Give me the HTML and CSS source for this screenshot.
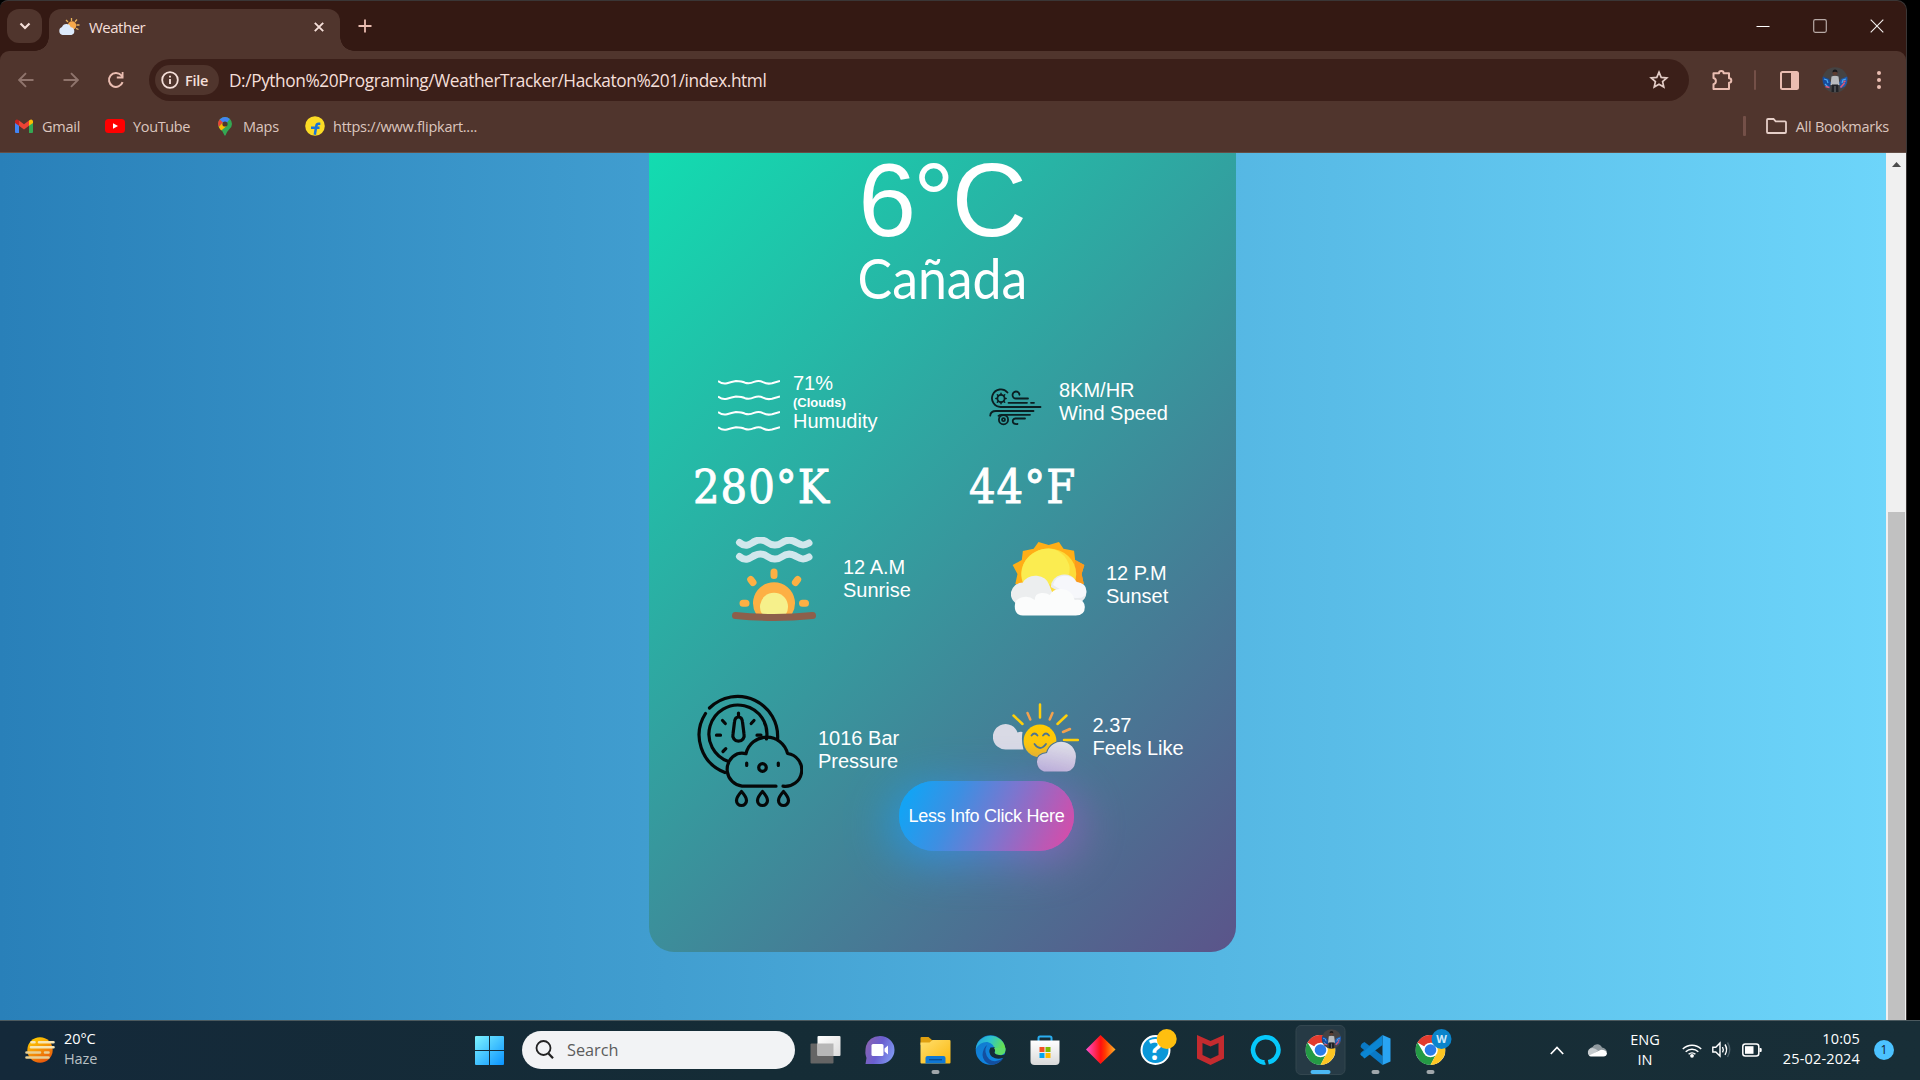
FILE: index.html
```
<!DOCTYPE html>
<html lang="en">
<head>
<meta charset="utf-8">
<title>Weather</title>
<link rel="stylesheet" href="styles.css">
</head>
<body>
<svg class="defs" width="0" height="0">
  <defs>
    <linearGradient id="g-start" x1="0" y1="0" x2="1" y2="1"><stop offset="0" stop-color="#7df3ff"/><stop offset="1" stop-color="#0a93ff"/></linearGradient>
    <linearGradient id="g-haze" x1="0.2" y1="0" x2="0.7" y2="1"><stop offset="0" stop-color="#ffd000"/><stop offset="1" stop-color="#e8540c"/></linearGradient>
    <linearGradient id="g-chat" x1="0" y1="0.2" x2="1" y2="0.6"><stop offset="0" stop-color="#8a63b0"/><stop offset=".5" stop-color="#6a5fd0"/><stop offset="1" stop-color="#7f96f0"/></linearGradient>
    <linearGradient id="g-folder" x1="0" y1="0" x2="1" y2="1"><stop offset="0" stop-color="#ffdf6e"/><stop offset="1" stop-color="#fbb70d"/></linearGradient>
    <linearGradient id="g-edge" x1="0" y1="0" x2="1" y2="0.3"><stop offset="0" stop-color="#1f9fe0"/><stop offset=".5" stop-color="#2cc3d0"/><stop offset="1" stop-color="#66e04f"/></linearGradient>
    <linearGradient id="g-edge2" x1="0" y1="0" x2="0.5" y2="1"><stop offset="0" stop-color="#1278c8"/><stop offset="1" stop-color="#0f86e4"/></linearGradient>
    <linearGradient id="g-store" x1="0" y1="0" x2="0" y2="1"><stop offset="0" stop-color="#ffffff"/><stop offset="1" stop-color="#d9d9d9"/></linearGradient>
    <linearGradient id="g-diamond" x1="0" y1="0" x2="1" y2="0"><stop offset="0" stop-color="#ff4fd0"/><stop offset=".5" stop-color="#ff1010"/><stop offset=".65" stop-color="#ff3a00"/><stop offset="1" stop-color="#ffb42a"/></linearGradient>
    <linearGradient id="g-tv" x1="0" y1="0" x2="1" y2="1"><stop offset="0" stop-color="#ffffff"/><stop offset="1" stop-color="#dcdcdc"/></linearGradient>
    <linearGradient id="g-cloud" x1="0.6" y1="0" x2="0.4" y2="1"><stop offset="0" stop-color="#dedfe8"/><stop offset="1" stop-color="#c6b9dc"/></linearGradient>
    <linearGradient id="g-smile" x1="0" y1="0" x2="0" y2="1"><stop offset="0" stop-color="#ffcc00"/><stop offset=".6" stop-color="#fdc50c"/><stop offset="1" stop-color="#e9b32e"/></linearGradient>
    <symbol id="avatar" viewBox="0 0 26 26">
      <circle cx="13" cy="13" r="12.7" fill="#454343"/>
      <path d="M.8 9.5 7 12l2 4-1.500 5.500-4.500-2Q.5 16 .5 12Z" fill="#174b9c"/>
      <path d="M25.200 9.500 19 12l-2 4 1.500 5.500 4.500-2Q25.500 16 25.500 12Z" fill="#1f5aae"/>
      <path d="M2 12l3 1 1 3M3 17l3 3M24 12l-3 1-1 3" stroke="#4aa7ee" stroke-width="1.200" fill="none"/>
      <path d="M3.500 19.500l4 1M22.500 16l-4 4.500M23.500 14l-2 1" stroke="#df5875" stroke-width="1.600" fill="none"/>
      <path d="M9.500 9.500Q13 8 16.500 9.500L17.500 18H8.500Z" fill="#b8babd"/>
      <path d="M10 17.500h6l.5 7.500H9.500Z" fill="#202226"/>
      <path d="M13 19v6" stroke="#9a9ca0" stroke-width=".7"/>
      <circle cx="13" cy="6" r="2.500" fill="#5b3c30"/><path d="M10.500 5.500q0-3 2.500-3t2.500 3q-2.500-1.500-5 0" fill="#17181a"/>
    </symbol>
    <symbol id="chrome" viewBox="0 0 30 30">
      <circle cx="15" cy="15" r="15" fill="#fff"/>
      <path d="M15 15 2 7.500A15 15 0 0 1 28 7.500L28 8H15Z" fill="#e33b2e"/>
      <path d="M8.500 18.500 2 7.500A15 15 0 0 0 15 30L21 18.500Z" fill="#249a45"/>
      <path d="M21 18.500 15 30A15 15 0 0 0 28 7.700H15Z" fill="#fdc623"/>
      <circle cx="15" cy="15" r="7.300" fill="#fff"/><circle cx="15" cy="15" r="5.800" fill="#2a7ce8"/>
    </symbol>
  </defs>
</svg>

<div class="window">
  <header class="tabstrip">
    <div class="tab-search"><svg width="12" height="8" viewBox="0 0 12 8"><path d="M1.500 1.500 6 6l4.500-4.500" fill="none" stroke="#f5dfd9" stroke-width="2.200"/></svg></div>
    <div class="tab">
      <svg class="favicon" width="22" height="18" viewBox="0 0 22 18">
        <path d="M13.500 0v3M19 1.500l-2 2.200M21.500 7h-3M8 2l2 2M20.500 11.500l-2.500-1.200" stroke="#e8b25a" stroke-width="1.300"/>
        <circle cx="14" cy="7.500" r="4.300" fill="#f6a94a"/>
        <path d="M4.500 17a4.200 4.200 0 0 1-.5-8A4.600 4.600 0 0 1 12.700 9.200 4 4 0 0 1 13.500 17Z" fill="#dceafb"/>
      </svg>
      <span class="tab-title">Weather</span>
      <svg class="tab-close" width="10" height="10" viewBox="0 0 10 10"><path d="M.8.8l8.400 8.400M9.200.8.8 9.200" stroke="#f5dfd9" stroke-width="1.900"/></svg>
    </div>
    <svg class="tab-plus" width="14" height="14" viewBox="0 0 14 14"><path d="M7 .5v13M.5 7h13" stroke="#eabdb1" stroke-width="1.800"/></svg>
    <div class="win-controls">
      <svg width="14" height="14" viewBox="0 0 14 14"><path d="M.5 7.500h13" stroke="#fff"/></svg>
      <svg width="14" height="14" viewBox="0 0 14 14"><rect x=".7" y=".7" width="12.600" height="12.600" rx="1.500" fill="none" stroke="#b8aaa6" stroke-width="1.200"/></svg>
      <svg width="14" height="14" viewBox="0 0 14 14"><path d="M.7.700l12.600 12.600M13.300.7.700 13.300" stroke="#f4efee" stroke-width="1.100"/></svg>
    </div>
  </header>

  <div class="chrome-body">
    <div class="toolbar">
      <svg class="nav" width="16" height="16" viewBox="0 0 16 16"><path d="M15.500 8H1.800M8 1.200 1.200 8 8 14.800" fill="none" stroke="#8f746c" stroke-width="1.900"/></svg>
      <svg class="nav" width="16" height="16" viewBox="0 0 16 16"><path d="M.5 8h13.700M8 1.200 14.800 8 8 14.800" fill="none" stroke="#8f746c" stroke-width="1.900"/></svg>
      <svg class="nav" width="18" height="18" viewBox="0 0 18 18"><path d="M15.600 11.200A7 7 0 1 1 14.200 4.200L15.500 6" fill="none" stroke="#eabdb1" stroke-width="2"/><path d="M16.500 1v6.500H9.800V5.600h4.900V1Z" fill="#eabdb1"/></svg>
      <div class="omnibox">
        <div class="chip">
          <svg width="18" height="18" viewBox="0 0 18 18"><circle cx="9" cy="9" r="7.800" fill="none" stroke="#f5dfd9" stroke-width="1.800"/><path d="M9 8v5M9 4.800v1.700" stroke="#f5dfd9" stroke-width="1.900"/></svg>
          <span>File</span>
        </div>
        <span class="url">D:/Python%20Programing/WeatherTracker/Hackaton%201/index.html</span>
        <svg class="star" width="20" height="20" viewBox="0 0 20 20"><path d="M10 2.200l2.200 5.200 5.600.5-4.200 3.700 1.200 5.500L10 14.200l-4.800 2.900 1.200-5.500L2.200 7.900l5.600-.5Z" fill="none" stroke="#e2cbc5" stroke-width="1.700"/></svg>
      </div>
      <svg class="ext" width="22" height="22" viewBox="0 0 22 22"><path d="M2.500 4.200H8a2.300 2.300 0 0 1 4.600 0H18v5a2.300 2.300 0 0 1 0 4.600V20H2.500v-4.800a3.200 3.200 0 0 0 0-6.200Z" fill="none" stroke="#eabdb1" stroke-width="2" stroke-linejoin="round"/></svg>
      <div class="vbar"></div>
      <svg class="panel" width="19" height="19" viewBox="0 0 19 19"><rect x="1" y="1" width="17" height="17" rx="1.500" fill="none" stroke="#eabdb1" stroke-width="2"/><path d="M11 1h7v17h-7Z" fill="#eabdb1"/></svg>
      <svg class="avatar" width="26" height="26"><use href="#avatar"/></svg>
      <svg class="dots" width="4" height="18" viewBox="0 0 4 18"><circle cx="2" cy="2" r="2" fill="#eabdb1"/><circle cx="2" cy="9" r="2" fill="#eabdb1"/><circle cx="2" cy="16" r="2" fill="#eabdb1"/></svg>
    </div>
    <div class="bookmarks">
      <svg width="18" height="14" viewBox="0 0 18 14"><path d="M0 2v11q0 1 1 1h3V6Z" fill="#4285f4"/><path d="M18 2v11q0 1-1 1h-3V6Z" fill="#34a853"/><path d="M4 1.500 9 5.300l5-3.800v5.300L9 10.500 4 6.800Z" fill="#ea4335"/><path d="M0 2Q1-.8 4 1.500v5.300L0 4Z" fill="#c5221f"/><path d="M18 2Q17-.8 14 1.500v5.300L18 4Z" fill="#fbbc04"/></svg>
      <span class="bm bm-gmail">Gmail</span>
      <svg width="20" height="14" viewBox="0 0 20 14"><rect width="20" height="14" rx="3.500" fill="#f00"/><path d="M8 4.200v5.600L13 7Z" fill="#fff"/></svg>
      <span class="bm bm-yt">YouTube</span>
      <svg width="14" height="19" viewBox="0 0 14 19"><path d="M7 0a7 7 0 0 0-7 7q0 2 1 3.500Q5 14 6.300 18q.7 1.600 1.400 0Q8.500 15 11.500 12 14 9.500 14 7A7 7 0 0 0 7 0Z" fill="#34a853"/><path d="M11.800 2 9 5.400 4.700 9 1.600 2.500 4.500.5Q8.500-1 11.800 2Z" fill="#4285f4"/><path d="M1.600 2.500Q-1 6 .8 10L5 5.500Z" fill="#ea4335"/><path d="M.8 10q1 2 2.500 3.500L9.200 8.500 4.800 5.600Z" fill="#fbbc04"/><circle cx="7" cy="7" r="2.600" fill="#50352d"/></svg>
      <span class="bm bm-maps">Maps</span>
      <svg width="20" height="20" viewBox="0 0 20 20"><circle cx="10" cy="10" r="9.800" fill="#fbdb25"/><path d="M15.300 7.800h-1.800q-1.800 0-2.200 2.200l-1.500 8.800M6 11.800h8.500" fill="none" stroke="#1a73d8" stroke-width="2.500"/></svg>
      <span class="bm bm-flip">https://www.flipkart....</span>
      <div class="vbar"></div>
      <svg class="all-folder" width="21" height="16" viewBox="0 0 21 16"><path d="M1 2q0-1 1-1h5.500l2.200 2.400H19q1 0 1 1V14q0 1-1 1H2q-1 0-1-1Z" fill="none" stroke="#e6cfc8" stroke-width="1.800"/></svg>
      <span class="bm bm-all">All Bookmarks</span>
    </div>
  </div>

  <div class="viewport">
    <main class="page">
      <section class="card">
        <h1 class="temp">6°C</h1>
        <h2 class="city">Cañada</h2>

        <div class="row row-air">
          <div class="cell humidity">
            <svg width="62" height="52" viewBox="0 0 62 52" fill="none" stroke="#fff" stroke-width="2"><path id="w" d="M0 2q4.500 3.500 9 2.200t9-2.200q6 0 9 1.700 4.500 1.300 9-.8 5-2 9 .3 4.500 2.200 9 1 3-.9 8-2.200"/><use href="#w" y="15.500"/><use href="#w" y="31"/><use href="#w" y="46.300"/></svg>
            <p>71%<small>(Clouds)</small>Humudity</p>
          </div>
          <div class="cell wind">
            <svg width="53" height="38" viewBox="0 0 53 38" fill="none" stroke="#0b1f22" stroke-width="1.800" stroke-linecap="round">
              <path d="M51.500 19H12A8.800 8.800 0 1 1 18.500 4.500"/><circle cx="12" cy="10.500" r="3.600"/><path d="M12 5.300v1.500M12 14.200v1.500M6.800 10.500h1.500M15.700 10.500h1.500M8.300 6.800l1 1M14.700 13.200l1 1M8.300 14.200l1-1M14.700 7.800l1-1" stroke-width="1.500"/>
              <path d="M39 10.500H27a3.500 3.500 0 1 1 3.500-3.700M19.500 14.800H38M42 14.800h3"/>
              <path d="M44.500 23H7q-5.500 0-5.800 4.700M41 26.800H12.500q-2 0-3 1"/><circle cx="14.500" cy="31.700" r="4.600"/><circle cx="14.500" cy="31.700" r="1.500"/><path d="M36 30.500H26.500q-3.500.5-2.500 4 1 2 4.500 1.500"/>
            </svg>
            <p>8KM/HR<br>Wind Speed</p>
          </div>
        </div>

        <div class="row row-temps"><span class="cell kelvin">280°K</span><span class="cell fahr">44°F</span></div>

        <div class="row row-sun">
          <div class="cell sunrise">
            <svg width="84" height="84" viewBox="0 0 84 84">
              <g fill="none" stroke="#d0e7ec" stroke-width="7" stroke-linecap="round"><path d="M7.500 5.500c7 6 11 1 15 -1s9-2 13 1 10 3.500 14 .5 8-4 13-1.500 8 5.500 14.500 1.500"/><path d="M7.500 19.500c7 6 11 1 15 -1s9-2 13 1 10 3.500 14 .5 8-4 13-1.500 8 5.500 14.500 1.500"/></g>
              <g stroke="#fdb044" stroke-width="7" stroke-linecap="round"><path d="M42 35v3.500M18.700 42.500l2.300 3M65.700 42.500l-2.300 3M11 66.300h3M70.500 66.300h3"/></g>
              <path d="M24 77a21 21 0 1 1 36 0Z" fill="#fdb044"/><path d="M30 77a14 14 0 1 1 24 0Z" fill="#f6f08b"/>
              <path d="M3.500 78.500q38.500 4 77 0" fill="none" stroke="#8d5f4b" stroke-width="7" stroke-linecap="round"/>
            </svg>
            <p>12 A.M<br>Sunrise</p>
          </div>
          <div class="cell sunset">
            <svg width="76" height="74" viewBox="3 0 70.500 74" preserveAspectRatio="none">
              <path d="M38 3 47.500 0l4.200 6.700 9.800 2 1 9.300 8.500 5-2.500 9 2 10H7l2-10-4.500-9 8.500-5L14 9l10-2.300L28.500 0Z" fill="#ffae17"/>
              <path d="M62.500 18 71 23l-2.500 9 2 10H60Z" fill="#fb9a1c"/>
              <circle cx="38" cy="32" r="25.500" fill="#fddc3a"/><path d="M38 6.500a25.500 25.500 0 0 0-23 36h37Q59 32 57 23 52 8 38 6.500" fill="#fbec50"/>
              <path d="M11 63A11.500 11.500 0 0 1 14 40.500 13.500 13.500 0 0 1 38.500 43L44 58 28 62Z" fill="#eceeef"/>
              <path d="M40 45A12.500 12.500 0 0 1 64 40 11 11 0 0 1 66 61Z" fill="#e9ebee"/>
              <path d="M42 43A11.500 11.500 0 0 1 63.500 40Q73 41 73 49T62 56Z" fill="#f6f7fb"/>
              <path d="M14 73.500Q6.500 73 6.500 64.500T15 55Q20 54 25 58 25 51.500 31 51 36 50.500 39 53 42 46.500 50 47 60 48 62 58 71 56 71.500 65 71.500 73.500 63 73.500Z" fill="#fbfcfc"/>
            </svg>
            <p>12 P.M<br>Sunset</p>
          </div>
        </div>

        <div class="row row-misc">
          <div class="cell pressure">
            <svg width="106" height="114" viewBox="0 0 106 114" fill="none" stroke="#050808" stroke-width="3.200" stroke-linecap="round" stroke-linejoin="round">
              <path d="M8.500 19.500A40 40 0 0 0 28 78.500M12.500 14A40 40 0 0 1 80.500 46"/>
              <path d="M31.500 67.500A29 29 0 1 1 69.500 45"/>
              <path d="M41.500 19v4M41.500 23q3.500 0 4 5l1.500 12a5.700 5.700 0 1 1-11 0L37.500 28q.5-5 4-5M25.500 26.500l2.800 3M57 26.500l-2.800 3M19.500 41.200h4M60 41.200h4M26 57.500l2.800-2.800"/>
              <path d="M79 92.200H45a17 17 0 0 1-4.500-32.500q4.500-1.200 8.500 0A21.300 21.300 0 0 1 90.500 59.500 16.500 16.500 0 0 1 86 92.200"/>
              <circle cx="65.500" cy="73.500" r="3.800"/><path d="M49.700 69v2.500M81.300 69v2.500"/>
              <path id="d" d="M44.500 97.500q-5 5.500-5 9a5 5 0 0 0 10 0q0-3.500-5-9Z"/><use href="#d" x="21"/><use href="#d" x="42"/>
            </svg>
            <p>1016 Bar<br>Pressure</p>
          </div>
          <div class="cell feels">
            <svg width="86" height="69" viewBox="0 0 86 69">
              <path d="M13 46.500A12.700 12.700 0 1 1 24.500 29.500Q27 28.500 29.500 29Q28 38 30.500 46.500Z" fill="#d9dae5"/>
              <g stroke="#ffcf0a" stroke-width="2.500" stroke-linecap="round"><path d="M47 1.500v13M20.500 12.500l9 8.500M73.500 12.500l-9 8.500M71 37h14"/></g>
              <g stroke="#f2a14e" stroke-width="2.500" stroke-linecap="round"><path d="M34.500 10l2.800 6.500M59.500 10l-2.800 6.500M70 29l7-3"/></g>
              <circle cx="47" cy="38" r="16.400" fill="url(#g-smile)"/>
              <path d="M38.500 32.500q3-4 6 0M50 32.500q3-4 6 0M41.500 41q5.500 8 11.500 0" fill="none" stroke="#4d7590" stroke-width="1.800" stroke-linecap="round"/>
              <path d="M51 68.500Q44 66 44 58.500T54 50A14.500 14.500 0 0 1 82.500 57Q82 67 74 68.500Z" fill="url(#g-cloud)" stroke="#4b7590" stroke-width="2" paint-order="stroke"/>
            </svg>
            <p>2.37<br>Feels Like</p>
          </div>
        </div>

        <button class="less">Less Info Click Here</button>
      </section>
    </main>
    <div class="scrollbar"><svg width="9" height="5" viewBox="0 0 9 5"><path d="M0 5 4.500 0 9 5Z" fill="#4c4c4c"/></svg><div class="thumb"></div></div>
  </div>
</div>

<footer class="taskbar">
  <svg class="haze" width="30" height="26" viewBox="0 0 30 26"><circle cx="15" cy="13" r="12.700" fill="url(#g-haze)"/><g stroke="#f8e6b4" stroke-width="2.600" stroke-linecap="round"><path d="M6.500 5.300h3M14 5.300h14.500M6 10.300h22.500"/><path d="M1.500 15.500H15M20 15.500h3.500M1.500 20.500h22" stroke="#e8cf94"/></g></svg>
  <div class="weather-text">20°C<br><span class="haze-label">Haze</span></div>
  <svg class="start" width="29" height="29" viewBox="0 0 29 29"><path d="M1 0h13v14H0V1Q0 0 1 0ZM15 0h13q1 0 1 1v13H15ZM0 15h14v14H1q-1 0-1-1ZM15 15h14v13q0 1-1 1H15Z" fill="url(#g-start)"/></svg>
  <div class="search"><svg width="20" height="20" viewBox="0 0 20 20"><circle cx="8.500" cy="8" r="7" fill="none" stroke="#222" stroke-width="1.800"/><path d="M13.500 13.500 18 18.200" stroke="#222" stroke-width="2.300"/></svg><span>Search</span></div>
  <div class="apps">
    <svg width="55" height="60"><rect x="12.500" y="23.500" width="23" height="20" rx="1" fill="#656565"/><rect x="19.500" y="16" width="23" height="20" rx="1" fill="url(#g-tv)"/><path d="M19.500 23.500h16V36H20.500q-1 0-1-1Z" fill="#b7b7b7"/></svg>
    <svg width="55" height="60"><path d="M27 16A14.500 14 0 1 1 27 44H12.500l1-6Q11.500 33 13 26 16 16.500 27 16Z" fill="url(#g-chat)"/><rect x="18.500" y="24" width="12" height="12" rx="1.500" fill="#fff"/><path d="M31.500 28.500l3.500-3v9l-3.500-3Z" fill="#fff"/></svg>
    <svg width="55" height="60"><path d="M12.500 18q0-1 1-1h7l4 3.500V25h-12Z" fill="#e0a010"/><path d="M12.500 22.500h9l3-2.500h17q1 0 1 1v21.500q0 1-1 1h-28q-1 0-1-1Z" fill="url(#g-folder)"/><path d="M17.500 43.500V38q0-2 2-2H35.500q2 0 2 2v5.500Z" fill="#0f78d4"/><path d="M21 39.700h13" stroke="#0a4c91" stroke-width="1.300"/><rect x="23.500" y="50" width="8" height="4" rx="2" fill="#a0a7ab"/></svg>
    <svg width="55" height="60"><circle cx="27.500" cy="30" r="14.800" fill="url(#g-edge2)"/><path d="M12.700 29A15 15 0 0 1 42.500 29Q42.500 35 36 35 30 34.500 32 31 31.500 23.500 24.500 22 17 21.500 12.700 29Z" fill="url(#g-edge)"/><path d="M24 25Q20 32 26 39 32 44 40.500 38 36 45 27.500 44.800 20 42 19.500 35 20 28 24 25Z" fill="#134fa0"/><path d="M27.500 27.500q-3 5 1.500 9.200 5 3.500 11.500 1l2.500 1.500V34q-3 1.500-7 1-6-1-4-4 .5-2-.5-3.700Z" fill="#152b38"/><path d="M31 28q3 6.500 7 6.800 5-.8 4.300-7Z" fill="#5fdc69"/></svg>
    <svg width="55" height="60"><path d="M20.500 21v-3q0-1.500 1.500-1.500h10q1.500 0 1.500 1.500v3" fill="none" stroke="#2aaef0" stroke-width="2"/><path d="M12.500 20.500h29V41q0 4-4 4h-21q-4 0-4-4Z" fill="url(#g-store)"/><path d="M21.500 27h5v5h-5Z" fill="#f25022"/><path d="M27.500 27h5v5h-5Z" fill="#7fba00"/><path d="M21.500 33h5v5h-5Z" fill="#00a4ef"/><path d="M27.500 33h5v5h-5Z" fill="#ffb900"/></svg>
    <svg width="55" height="60"><path d="M13 29.500 27.500 15 42.500 29.500 27.500 44Z" fill="url(#g-diamond)"/></svg>
    <svg width="55" height="60"><circle cx="27.500" cy="30" r="14" fill="#0a97d8" stroke="#fff" stroke-width="2"/><text class="help-mark" x="27.500" y="39.500" text-anchor="middle">?</text><circle cx="38.700" cy="19" r="10" fill="#ffbf0f"/></svg>
    <svg width="55" height="60"><path d="M14 15 27.500 21 41 15V38.500L27.500 45 14 38.500Z" fill="#c42b2f"/><path d="M19.500 23 27.500 26.500 35.500 23v12L27.500 38.700 19.500 35Z" fill="#152b36"/></svg>
    <svg width="55" height="60"><path d="M26.500 42.500a12.700 12.700 0 1 1 3.800-.2" fill="none" stroke="#06c8fb" stroke-width="4.500"/><path d="M21.500 40q3 2 5.500 2.200.8 1.300.5 2.800-4 0-8-3Z" fill="#06c8fb"/></svg>
    <svg width="55" height="60"><rect x="3" y="5.500" width="49" height="49" rx="5" fill="#263a45" stroke="#33464f"/><use href="#chrome" x="12.500" y="15" width="30" height="30"/><use href="#avatar" x="28.500" y="9" width="20" height="20"/><rect x="17.500" y="50" width="20" height="4" rx="2" fill="#4cb9f5"/></svg>
    <svg width="55" height="60"><path d="M34.500 15 17 31l-3.500 5-1-1.500q-.5-1 .5-2L34.500 15ZM14 23.500l2.500-1.500 18 14V45L13 27.500q-.8-1 0-2.500Z" fill="#0a79c5"/><path d="M34.500 15 42.500 18.500V41.500L34.500 45Z" fill="#29a4f3"/><path d="M12.500 34.500 34.500 15v10L16.500 38.500Z" fill="#0b86d4"/><rect x="23.500" y="50" width="8" height="4" rx="2" fill="#a0a7ab"/></svg>
    <svg width="55" height="60"><use href="#chrome" x="12.500" y="15" width="30" height="30"/><circle cx="38.500" cy="19" r="10" fill="#0a84cc"/><text class="badge-w" x="38.500" y="23" text-anchor="middle">W</text><rect x="23.500" y="50" width="8" height="4" rx="2" fill="#a0a7ab"/></svg>
  </div>
  <div class="tray">
    <svg class="t-chev" width="14" height="9" viewBox="0 0 14 9"><path d="M.8 8 7 1.500 13.200 8" fill="none" stroke="#fff" stroke-width="1.700"/></svg>
    <svg class="t-cloud" width="20" height="14" viewBox="0 0 20 14"><path d="M2 9A5 5 0 0 1 5.500 4 5.200 5.200 0 0 1 15 4.500q4 .5 5 4.500L10 12Z" fill="#8f999e"/><path d="M1 11Q0 5.500 5.500 5 8 5 11 7.500L4 13Q1.500 13 1 11Z" fill="#c6cccf"/><path d="M2 12.500 14 6.800Q19.500 7 20 10.500 19.500 13.500 16.500 13.500H4Q2.500 13.500 2 12.500Z" fill="#fff"/></svg>
    <div class="lang">ENG<br>IN</div>
    <svg class="t-wifi" width="20" height="15" viewBox="0 0 20 15"><g fill="none" stroke="#fff" stroke-width="1.500"><path d="M.8 6a13 13 0 0 1 18.400 0M3.700 8.700a9 9 0 0 1 12.600 0M6.600 11.300a5 5 0 0 1 6.800 0"/></g><circle cx="10" cy="12.800" r="1.900" fill="#fff"/></svg>
    <svg class="t-vol" width="20" height="18" viewBox="0 0 20 18" fill="none" stroke="#fff" stroke-width="1.400"><path d="M.8 6.200h3L8 2v13l-4.200-4H.8Z"/><path d="M10.500 6q1.500 2.700 0 5.300M13 3.500q3.200 5 0 10.300"/><path d="M15.500 1.500q4.500 7 0 14.500" stroke="#4c5f68"/></svg>
    <svg class="t-bat" width="20" height="14" viewBox="0 0 20 14"><rect x=".8" y="1" width="16" height="12" rx="2.500" fill="none" stroke="#fff" stroke-width="1.500"/><rect x="3" y="3.200" width="8.500" height="7.600" fill="#fff"/><path d="M17.500 5h1.200q1 0 1 1v2q0 1-1 1h-1.200Z" fill="#fff"/></svg>
    <div class="clock"><span>10:05</span><span>25-02-2024</span></div>
    <div class="count">1</div>
  </div>
</footer>
</body>
</html>
```
FILE: styles.css
```
* { box-sizing: border-box; }
html, body { height: 100%; }
body {
  margin: 0;
  width: 1920px;
  height: 1080px;
  overflow: hidden;
  background: #000;
  display: flex;
  flex-direction: column;
  font-family: "Open Sans", "Noto Sans", sans-serif;
}
svg { display: block; flex: none; }
.defs { position: absolute; }
h1, h2, p { margin: 0; font-weight: 400; }
span { white-space: nowrap; }

/* Browser window */
.window {
  width: 1907px;
  height: 1020px;
  display: flex;
  flex-direction: column;
  background: #341913;
  border-top: 1px solid #3a3636;
  border-right: 1px solid #3a3636;
  border-radius: 8px 10px 0 0;
  overflow: hidden;
}
.tabstrip { height: 50px; display: flex; align-items: flex-start; padding: 8px 0 0 7px; }
.tab-search {
  width: 35px; height: 34px; border-radius: 12px; background: #50352d;
  display: flex; align-items: center; justify-content: center;
}
.tab {
  position: relative;
  width: 291px; height: 42px; margin-left: 7px; padding: 0 16px 6px 9px;
  border-radius: 12px 12px 0 0; background: #50352d;
  display: flex; align-items: center;
  color: #f5dfd9; font-size: 15px; letter-spacing: -.5px;
}
.tab::before, .tab::after {
  content: ""; position: absolute; bottom: 0; width: 14px; height: 14px;
}
.tab::before { left: -14px; background: radial-gradient(circle at 0 0, transparent 13.5px, #50352d 14px); }
.tab::after { right: -14px; background: radial-gradient(circle at 100% 0, transparent 13.5px, #50352d 14px); }
.tab-title { margin-left: 9px; flex: 1; }
.tab-plus { margin: 10px 0 0 18px; }
.win-controls { display: flex; gap: 43px; margin: 10px 22px 0 auto; }

.chrome-body {
  height: 102px; flex: none; background: #50352d; border-radius: 9px 9px 0 0;
  border-bottom: 1px solid #644e46;
}
.toolbar { height: 58px; display: flex; align-items: center; padding-left: 18px; }
.toolbar > * { flex: none; }
.nav { margin-right: 29px; }
.nav + .nav { margin-right: 28px; }
.nav + .nav + .nav { margin-right: 24px; }
.omnibox {
  width: 1540px; height: 42px; border-radius: 21px; background: #3b1f19;
  display: flex; align-items: center; padding: 0 20px 0 6px;
}
.chip {
  width: 64px; height: 30px; border-radius: 15px; background: #50352d;
  display: flex; align-items: center; gap: 6px; padding-left: 6px;
  color: #f5dfd9; font-size: 14.500px; font-weight: 600; letter-spacing: -.3px;
}
.url { margin-left: 10px; flex: 1; color: #f5dfd9; font-size: 17.300px; letter-spacing: -.42px; }
.ext { margin-left: 22px; }
.vbar { width: 2px; height: 20px; border-radius: 1px; background: #745048; }
.toolbar .vbar { margin-left: 21px; }
.panel { margin-left: 24px; }
.avatar { margin-left: 23px; }
.dots { margin-left: 29px; }
.bookmarks {
  height: 34px; display: flex; align-items: center; padding: 0 17px 0 15px;
  color: #dcc6bf; font-size: 14.500px; letter-spacing: -.25px;
}
.bm-gmail { width: 63px; margin-left: 9px; }
.bm-yt { width: 85px; margin-left: 8px; letter-spacing: -.35px; }
.bm-maps { width: 62px; margin-left: 11px; }
.bm-flip { margin-left: 8px; }
.bookmarks .vbar { margin-left: auto; width: 3px; }
.all-folder { margin: 0 9px 0 20px; }

/* Weather page */
.viewport { flex: 1; display: flex; min-height: 0; }
.page {
  width: 1886px; display: flex; align-items: flex-start; padding-left: 649px;
  background: linear-gradient(to right, #2980b9, #6dd5fa);
}
.card {
  width: 587px; height: 799px; flex: none; border-radius: 0 0 25px 25px;
  background: linear-gradient(135deg, #00feba, #5b548a) bottom / 100% 1145px no-repeat;
  color: #fff; font-family: "Liberation Sans", Arial, sans-serif;
  font-size: 20px; line-height: 23px;
}
.temp { margin-top: 3px; font-size: 104px; line-height: 88px; letter-spacing: -3px; text-align: center; text-indent: -3px; }
.city { margin-top: 3px; font: 400 56px/62px Lato, sans-serif; text-align: center; transform: scaleX(.925); }
.row { display: grid; grid-template-columns: 294px 293px; }
.cell { display: flex; align-items: flex-start; }
.row-air { margin-top: 63px; height: 61px; }
.row-air small { display: block; font-size: 13px; line-height: 15px; font-weight: 700; }
.humidity { padding-left: 69px; gap: 13px; }
.humidity svg { margin-top: 7px; }
.wind { padding-left: 46px; gap: 17px; }
.wind svg { margin-top: 16px; }
.wind p { margin-top: 7px; }
.row-temps {
  margin-top: 31px; height: 47px;
  font: 400 46.500px/47px "DejaVu Serif Condensed", "DejaVu Serif", serif;
  font-stretch: condensed; letter-spacing: 1px; -webkit-text-stroke: .9px #fff;
}
.kelvin { padding-left: 44px; }
.fahr { padding-left: 26px; }
.row-sun { margin-top: 26px; height: 84px; }
.sunrise { padding-left: 83px; gap: 27px; }
.sunrise p { margin-top: 19px; }
.sunset { padding-left: 68px; gap: 19px; }
.sunset svg { margin-top: 5px; }
.sunset p { margin-top: 25px; }
.row-misc { margin-top: 73px; height: 87px; }
.pressure { padding-left: 48px; gap: 15px; }
.pressure p { margin-top: 33px; }
.feels { padding-left: 50px; gap: 13.500px; }
.feels svg { margin-top: 9px; }
.feels p { margin-top: 20px; }
.less {
  position: relative; z-index: 0; display: block;
  width: 175px; height: 70px; margin-left: 250px; padding: 0; border: 0; border-radius: 35px;
  background: linear-gradient(115deg, #14a3f4 8%, #3d8fe2 32%, #7b76cf 58%, #d44daa 95%);
  color: #fff; font: 18px/70px "Liberation Sans", Arial, sans-serif; letter-spacing: -.25px; white-space: nowrap;
}
.less::before {
  content: ""; position: absolute; z-index: -1; inset: 8px -6px -10px -8px; border-radius: 40px;
  background: linear-gradient(115deg, #14a3f4 10%, #4b86e0 50%, #c04fb4);
  filter: blur(24px); opacity: .8;
}
.less::after { content: ""; position: absolute; z-index: -1; inset: 0; border-radius: 35px; background: inherit; }

.scrollbar { width: 20px; background: #f0f0f0; display: flex; flex-direction: column; align-items: center; }
.scrollbar svg { margin-top: 9px; }
.thumb { width: 17px; flex: 1; margin: 345px 1px 0 2px; background: #c1c1c1; }

/* Taskbar */
.taskbar {
  width: 1920px; height: 60px; flex: none; display: flex; align-items: center;
  background: linear-gradient(to right, #14293a, #152c36 40%, #182e37);
  border-top: 1px solid #4c5a5f; color: #fff; font-size: 14.500px; line-height: 20px;
  padding-bottom: 1px;
}
.haze { margin-left: 25px; }
.weather-text { margin: -2px 0 0 9px; width: 40px; letter-spacing: -.1px; }
.haze-label { color: #b9c0c4; }
.start { margin-left: 371px; }
.search {
  width: 273px; height: 38px; margin-left: 18px; border-radius: 19px; background: #f2f3f5;
  display: flex; align-items: center; padding-left: 13px; gap: 12px; color: #5c5c5c; font-size: 16.300px;
}
.apps { display: flex; margin-left: 3px; }
.help-mark { font: 700 28px "Open Sans", sans-serif; fill: #fff; }
.badge-w { font: 700 11px "Open Sans", sans-serif; fill: #cfe9fa; }
.tray { display: flex; align-items: center; }
.t-chev { margin-left: 92px; }
.t-cloud { margin-left: 23px; }
.lang { width: 30px; margin-left: 23px; text-align: center; }
.t-wifi { margin-left: 22px; }
.t-vol { margin-left: 10px; }
.t-bat { margin-left: 10px; }
.clock {
  width: 79px; margin: -2px 0 0 19px; display: flex; flex-direction: column; align-items: flex-end;
  letter-spacing: .15px;
}
.count {
  width: 20px; height: 20px; margin-left: 14px; border-radius: 50%; background: #4cc2ff;
  color: #123; font-size: 12px; line-height: 20px; text-align: center;
}
```
